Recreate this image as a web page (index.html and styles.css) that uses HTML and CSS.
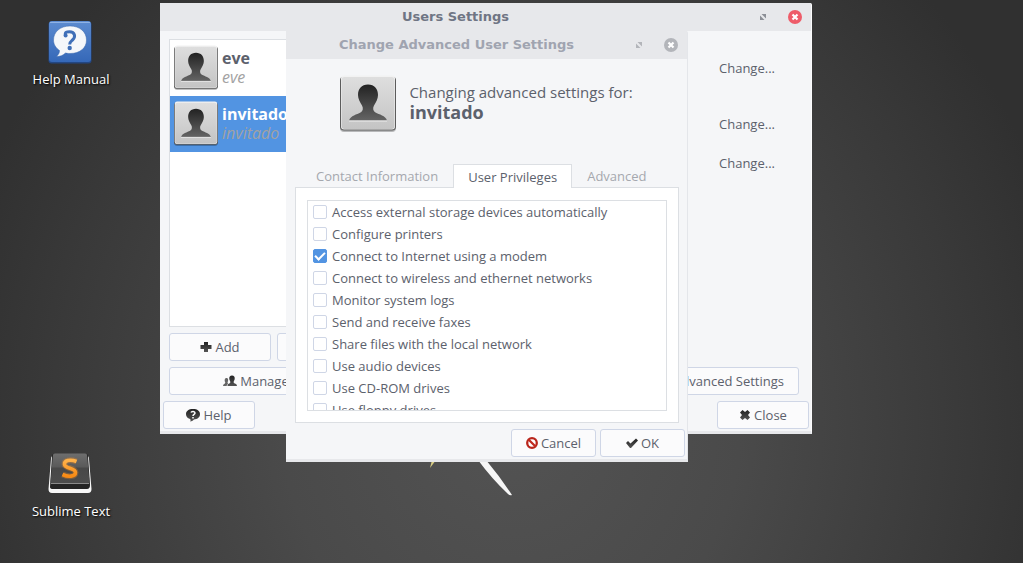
FILE: index.html
```
<!DOCTYPE html>
<html lang="en">
<head>
<meta charset="utf-8">
<title>Users Settings</title>
<link rel="stylesheet" href="styles.css">
</head>
<body class="desktop">
<svg class="defs" width="0" height="0" aria-hidden="true">
  <defs>
    <linearGradient id="tile" x1="0" y1="0" x2="0" y2="1"><stop offset="0" stop-color="#dedede"/><stop offset="1" stop-color="#c4c4c4"/></linearGradient>
    <linearGradient id="person" x1="0" y1="0" x2="0" y2="1"><stop offset="0" stop-color="#222"/><stop offset="1" stop-color="#646464"/></linearGradient>
    <linearGradient id="ink" x1="0" y1="0" x2="0" y2="1"><stop offset="0" stop-color="#222"/><stop offset="1" stop-color="#555"/></linearGradient>
    <linearGradient id="blue" x1="0" y1="0" x2="0" y2="1"><stop offset="0" stop-color="#5c8bd0"/><stop offset="1" stop-color="#3568b8"/></linearGradient>
    <linearGradient id="key" x1="0" y1="0" x2="0" y2="1"><stop offset="0" stop-color="#6e6e6e"/><stop offset="0.45" stop-color="#5a5a5a"/><stop offset="0.5" stop-color="#484848"/><stop offset="1" stop-color="#4c4c4c"/></linearGradient>
    <linearGradient id="orange" x1="0" y1="0" x2="0" y2="1"><stop offset="0" stop-color="#ffb24a"/><stop offset="1" stop-color="#f88a14"/></linearGradient>
    <symbol id="avatar" viewBox="0 0 56 58">
      <rect x="0" y="3" width="56" height="54" rx="4" fill="#000" opacity=".25"/>
      <rect x="0" y="1.500" width="56" height="54" rx="4" fill="#5c5c5c"/>
      <rect x="1" y="0.500" width="54" height="54" rx="3" fill="#f2f2f2"/>
      <rect x="1.500" y="2" width="53" height="52" rx="3" fill="url(#tile)"/>
      <path d="M28 9.500C34.500 9.500 38 14 38 20C38 24 36 27 34 30.500C32.500 33 33 36 35.500 37.500C39 39.500 45.500 40.500 47 45.500H9C10.500 40.500 17 39.500 20.500 37.500C23 36 23.500 33 22 30.500C20 27 18 24 18 20C18 14 21.500 9.500 28 9.500Z" fill="url(#person)"/>
      <path d="M9 46H47" stroke="#eee" stroke-width="1"/>
    </symbol>
    <symbol id="expand" viewBox="0 0 8 8"><path d="M2.500 1H7V5.500ZM1 2.500V7H5.500Z" fill="currentColor"/></symbol>
    <symbol id="shut" viewBox="0 0 14 14"><circle cx="7" cy="7" r="7" fill="currentColor"/><path d="M4.500 4.500L9.500 9.500M9.500 4.500L4.500 9.500" stroke="#fff" stroke-width="2.200"/></symbol>
  </defs>
</svg>

<svg class="wallpaper-art" viewBox="0 0 90 40" width="90" height="40" aria-hidden="true">
  <path d="M4 0L2 8L8 0Z" fill="#d8cd83"/>
  <path d="M50 0H58Q73 18 84 35Q82 36 80 34Q64 19 50 0Z" fill="#f6f6f6"/>
</svg>

<a class="launcher launcher-help" href="#help">
  <svg width="44" height="44" viewBox="0 0 44 44" aria-hidden="true">
    <rect x="0.500" y="1.500" width="43" height="42" rx="3" fill="#234783"/>
    <rect x="1" y="1" width="42" height="41" rx="3" fill="url(#blue)"/>
    <path d="M2 2.500H42" stroke="#8fb2e4"/>
    <path d="M22 6C32 6 38.500 12 38.500 20S32 33.500 22 33.500C20 33.500 18.500 33.300 17.500 33C15 35.500 12 36.500 8.500 36.500C10.500 34.500 11.500 33 11.500 30.500C8 28 5.500 24.500 5.500 20C5.500 12 12 6 22 6Z" fill="#f5f7fa" stroke="#3866ab" stroke-opacity=".5"/>
    <path d="M17.500 15.500C16.500 12 19 11.800 21.500 11.800C27 11.800 28 17 24.500 20C22.500 21.700 21.700 22 21.700 24.500" fill="none" stroke="#3f6fb8" stroke-width="3"/>
    <circle cx="17.600" cy="15.500" r="2" fill="#3f6fb8"/><circle cx="21.700" cy="28" r="2.200" fill="#3f6fb8"/>
  </svg>
  <span>Help Manual</span>
</a>
<a class="launcher launcher-sublime" href="#sublime">
  <svg width="44" height="44" viewBox="0 0 44 44" aria-hidden="true">
    <path d="M3 7Q3 4 5 4H39Q41 4 41 7L43.500 37Q43.500 41 40 41H4Q0.500 41 0.500 37Z" fill="#f7f7f7"/>
    <path d="M4 4Q4 2 6 2H38Q40 2 40 4L42 33Q42 37 39 37H5Q2 37 2 35Z" fill="#242424"/>
    <path d="M5 3Q5 1.500 7 1.500H37Q39 1.500 39 3L41.500 30Q41.500 31 40 31H4Q2.500 31 2.500 30Z" fill="url(#key)"/>
    <path d="M3 31.500H41" stroke="#8a8a8a"/>
    <path d="M28.500 9.500C22 7 16 8.500 16.500 12.500C17 17 27.500 15.500 27.500 20.500C27.500 25 20 25 14.500 22.500" fill="none" stroke="#f98b1a" stroke-opacity=".3" stroke-width="6"/>
    <path d="M28.500 9.500C22 7 16 8.500 16.500 12.500C17 17 27.500 15.500 27.500 20.500C27.500 25 20 25 14.500 22.500" fill="none" stroke="url(#orange)" stroke-width="3.600"/>
  </svg>
  <span>Sublime Text</span>
</a>

<main class="window window-users">
  <header class="titlebar">
    <h1 class="title">Users Settings</h1>
    <button class="win-button" aria-label="Maximize"><svg width="8" height="8"><use href="#expand"/></svg></button>
    <button class="win-button close" aria-label="Close window"><svg width="14" height="14"><use href="#shut"/></svg></button>
  </header>
  <div class="users-body">
    <section class="users-column">
      <ul class="user-list">
        <li class="user"><svg width="44" height="46" aria-hidden="true"><use href="#avatar"/></svg><div><strong>eve</strong><em>eve</em></div></li>
        <li class="user selected"><svg width="44" height="46" aria-hidden="true"><use href="#avatar"/></svg><div><strong>invitado</strong><em>invitado</em></div></li>
      </ul>
      <div class="button-pair">
        <button class="button"><svg width="12" height="12" viewBox="0 0 12 12"><path d="M4 1H8V4H11.500V8H8V11H4V8H0.500V4H4Z" fill="url(#ink)"/></svg>Add</button>
        <button class="button" aria-label="Delete"></button>
      </div>
      <button class="button"><svg width="14" height="12" viewBox="0 0 14 12"><path d="M9 0.500C11 0.500 12 2 11.700 4C11.500 5.500 10.500 6 10.700 7.500C11 8.700 14 8.500 14 11H4.500C4.500 8.500 7 8.700 7.300 7.500C7.500 6 6.500 5.500 6.300 4C6 2 7 0.500 9 0.500Z" fill="url(#ink)"/><path d="M3.500 3C5.500 3 5.500 5.500 4.500 7.500L5 8.500L3.500 11H0C0 9 2.200 9 2.300 7.500C1.300 5.500 1.500 3 3.500 3Z" fill="#666"/></svg>Manage Groups</button>
    </section>
    <section class="details-column">
      <button class="flat">Change...</button>
      <button class="flat flat-type">Change...</button>
      <button class="flat flat-password">Change...</button>
      <button class="button advanced">Advanced Settings</button>
    </section>
  </div>
  <footer class="users-footer">
    <button class="button"><svg width="14" height="14" viewBox="0 0 14 14"><path d="M7 1C11.500 1 14 3 14 6.300C14 9.500 11 11.500 8 11.500C7 12.800 5.500 13.500 4 13.500C5 12.500 4.700 11.500 4 11C1.500 10.300 0 8.500 0 6.300C0 3 2.500 1 7 1Z" fill="url(#ink)"/><path d="M5 4.500C5.500 3 9 3 9 5C9 6.500 7 6.300 7 8M7 9V10.500" fill="none" stroke="#fff" stroke-width="1.500"/></svg>Help</button>
    <button class="button"><svg width="12" height="12" viewBox="0 0 12 12"><path d="M3.500 1L6 3L8.500 1L11 3.500L9 6L11 8.500L8.500 11L6 9L3.500 11L1 8.500L3 6L1 3.500Z" fill="url(#ink)"/></svg><span>Close</span></button>
  </footer>
</main>

<section class="window window-advanced" role="dialog" aria-labelledby="dialog-title">
  <header class="titlebar inactive">
    <h2 class="title" id="dialog-title">Change Advanced User Settings</h2>
    <button class="win-button" aria-label="Maximize"><svg width="8" height="8"><use href="#expand"/></svg></button>
    <button class="win-button" aria-label="Close window"><svg width="14" height="14"><use href="#shut"/></svg></button>
  </header>
  <div class="dialog-heading">
    <svg width="56" height="58" aria-hidden="true"><use href="#avatar"/></svg>
    <p>Changing advanced settings for:<strong>invitado</strong></p>
  </div>
  <div class="notebook">
    <nav class="tabs" role="tablist">
      <button class="tab" role="tab" aria-selected="false">Contact Information</button>
      <button class="tab active" role="tab" aria-selected="true">User Privileges</button>
      <button class="tab" role="tab" aria-selected="false">Advanced</button>
    </nav>
    <div class="tab-page" role="tabpanel">
      <div class="privileges">
        <label class="privilege"><input type="checkbox">Access external storage devices automatically</label>
        <label class="privilege"><input type="checkbox">Configure printers</label>
        <label class="privilege"><input type="checkbox" checked>Connect to Internet using a modem</label>
        <label class="privilege"><input type="checkbox">Connect to wireless and ethernet networks</label>
        <label class="privilege"><input type="checkbox">Monitor system logs</label>
        <label class="privilege"><input type="checkbox">Send and receive faxes</label>
        <label class="privilege"><input type="checkbox">Share files with the local network</label>
        <label class="privilege"><input type="checkbox">Use audio devices</label>
        <label class="privilege"><input type="checkbox">Use CD-ROM drives</label>
        <label class="privilege"><input type="checkbox">Use floppy drives</label>
      </div>
    </div>
  </div>
  <footer class="dialog-footer">
    <button class="button"><svg width="12" height="12" viewBox="0 0 12 12"><circle cx="6" cy="6" r="4.800" fill="#fff" stroke="#b9261c" stroke-width="2.300"/><path d="M2.500 2.500L9.500 9.500" stroke="#c02a20" stroke-width="2.300"/></svg>Cancel</button>
    <button class="button"><svg width="12" height="12" viewBox="0 0 12 12"><path d="M0 6L2 4L4.500 6.500L10 1.500L12 3.500L5 11H4Z" fill="url(#ink)"/></svg>OK</button>
  </footer>
</section>
</body>
</html>
```
FILE: styles.css
```
* { box-sizing: border-box; }

.desktop {
  margin: 0;
  min-height: 100vh;
  position: relative;
  overflow: hidden;
  font: 13px/18px "Open Sans", sans-serif;
  color: #5c616c;
  background: radial-gradient(ellipse 56% 110% at 50% 75%, #535353 0%, #4a4a4a 40%, #393939 80%, #303030 100%);
}

.defs { position: absolute; }
.wallpaper-art { position: absolute; left: 428px; top: 460px; }

button { font: inherit; color: inherit; margin: 0; padding: 0; border: 0; background: none; }

/* Desktop launchers */
.launcher {
  position: absolute;
  left: 20px;
  width: 102px;
  display: flex;
  flex-direction: column;
  align-items: center;
  gap: 6px;
  color: #fff;
  text-decoration: none;
  text-shadow: 1px 1px 2px #000;
}
.launcher svg { margin-right: 2px; }
.launcher-help { top: 20px; }
.launcher-sublime { top: 452px; }

/* Window frames */
.window {
  position: absolute;
  display: flex;
  flex-direction: column;
  background: #f5f6f8;
  border-bottom: 3px solid #e7e8eb;
  border-radius: 2px 2px 0 0;
}
.window-users { left: 160px; top: 3px; width: 652px; border-right: 1px solid #fcfcfd; }
.window-advanced { left: 286px; top: 31px; width: 402px; border-right: 1px solid #e4e6ea; }

.titlebar {
  display: flex;
  align-items: center;
  gap: 8px;
  height: 28px;
  padding-right: 4px;
  background: #e7e8eb;
  color: #6f7584;
}
.titlebar.inactive { color: #a0a4b0; }
.title {
  flex: 1;
  margin: 0 -8px 0 0;
  text-align: center;
  font: bold 13px/16px "DejaVu Sans", sans-serif;
}
.win-button { width: 24px; height: 24px; display: grid; place-items: center; color: #8c8f96; }
.inactive .win-button { color: #b3b5ba; }
.win-button.close { color: #ee5c69; }

.button {
  display: flex;
  align-items: center;
  justify-content: center;
  gap: 3px;
  height: 28px;
  background: #fbfbfc;
  border: 1px solid #cfd6e6;
  border-radius: 3px;
  white-space: nowrap;
}

/* Users window */
.users-body { display: flex; justify-content: space-between; padding: 8px 12px 6px 9px; }
.users-column { width: 222px; display: flex; flex-direction: column; gap: 6px; }
.user-list {
  list-style: none;
  margin: 0;
  padding: 0;
  min-height: 288px;
  background: #fff;
  border: 1px solid #dcdfe3;
}
.user { display: flex; align-items: center; gap: 4px; height: 56px; padding: 0 4px; }
.user strong, .user em { display: block; font-size: 16px; line-height: 19px; }
.user em { color: #a2a2a2; }
.user.selected { background: #5294e2; }
.user.selected strong { color: #fff; }
.button-pair { display: grid; grid-template-columns: 102px 1fr; gap: 6px; }

.details-column { display: flex; flex-direction: column; align-items: flex-end; padding-top: 15px; }
.flat { width: 104px; height: 28px; }
.flat-type { margin-top: 28px; }
.flat-password { margin-top: 11px; }
.advanced { margin-top: auto; padding: 0 14px; }

.users-footer { display: flex; justify-content: space-between; padding: 0 2px 2px 3px; }
.users-footer .button { width: 92px; }

/* Advanced settings dialog */
.dialog-heading { display: flex; justify-content: center; gap: 13px; padding: 16px 0 0; }
.dialog-heading p { margin: 7px 0 0; font-size: 15px; line-height: 20px; }
.dialog-heading strong { display: block; font-size: 18px; }

.notebook { padding: 31px 8px 6px 9px; }
.tabs { display: flex; padding-left: 6px; }
.tab { height: 23px; padding: 0 14px; color: #a5a8ae; border: 1px solid transparent; border-bottom: 0; }
.tab.active {
  height: 24px;
  margin-bottom: -1px;
  color: #5c616c;
  background: #fff;
  border-color: #dcdfe3;
  position: relative;
}
.tab-page { padding: 12px 11px 11px; background: #fff; border: 1px solid #dcdfe3; }
.privileges { height: 211px; overflow: hidden; border: 1px solid #dcdfe3; }
.privilege { display: flex; align-items: center; gap: 5px; height: 22px; padding-left: 5px; }
.privilege input {
  appearance: none;
  width: 14px;
  height: 14px;
  margin: 0;
  border: 1px solid #cfd6e6;
  border-radius: 2px;
  background: #fff;
  display: grid;
  place-items: center;
}
.privilege input:checked { background: #5294e2; border-color: #5294e2; }
.privilege input:checked::before {
  content: "";
  width: 8px;
  height: 4px;
  margin-bottom: 3px;
  border-left: 2px solid #fff;
  border-bottom: 2px solid #fff;
  transform: rotate(-45deg);
}

.dialog-footer { display: flex; justify-content: flex-end; gap: 4px; padding: 0 2px 2px; }
.dialog-footer .button { width: 85px; }
```
